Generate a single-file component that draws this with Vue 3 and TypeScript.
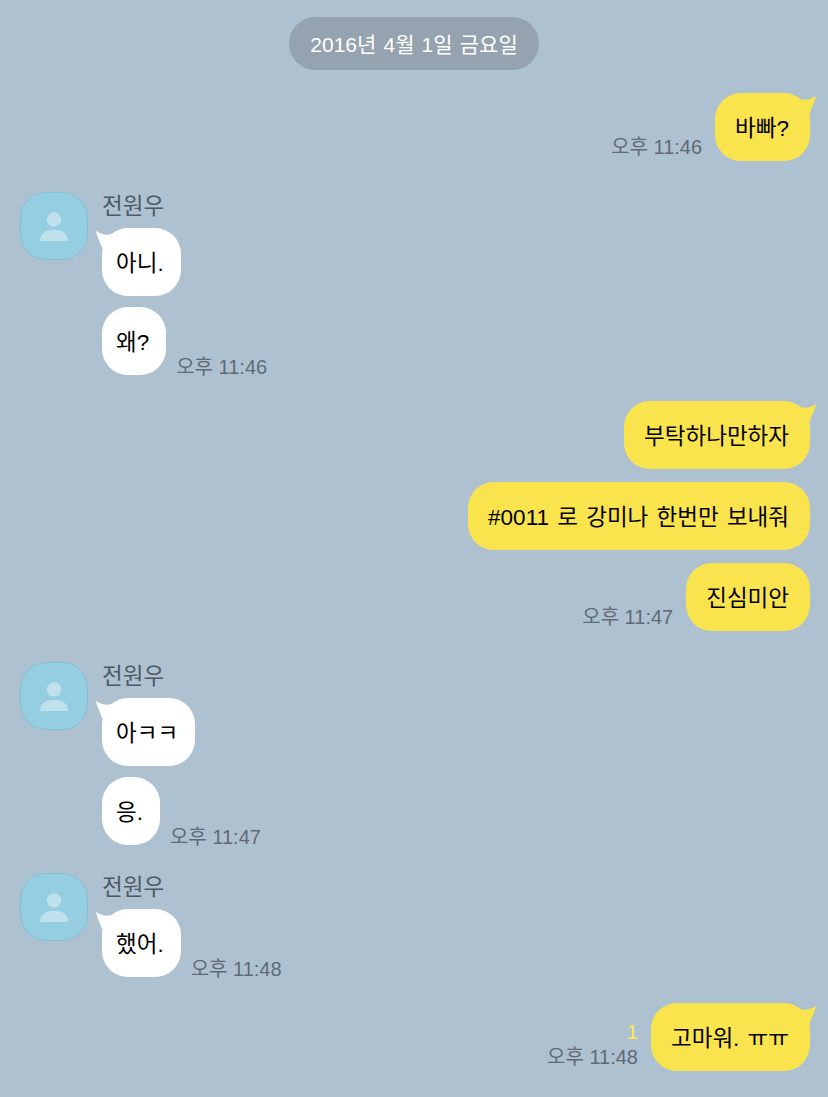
<script setup lang="ts">
type Bubble = { text: string; time?: string; unread?: string };
type Group = {
  mine: boolean;
  gap: "first" | "wide" | "mid" | "tight";
  bubbles: Bubble[];
};

const groups: Group[] = [
  { mine: true, gap: "first", bubbles: [{ text: "바빠?", time: "오후 11:46" }] },
  {
    mine: false,
    gap: "wide",
    bubbles: [{ text: "아니." }, { text: "왜?", time: "오후 11:46" }],
  },
  {
    mine: true,
    gap: "tight",
    bubbles: [
      { text: "부탁하나만하자" },
      { text: "#0011 로 강미나 한번만 보내줘" },
      { text: "진심미안", time: "오후 11:47" },
    ],
  },
  {
    mine: false,
    gap: "wide",
    bubbles: [{ text: "아ㅋㅋ" }, { text: "응.", time: "오후 11:47" }],
  },
  { mine: false, gap: "mid", bubbles: [{ text: "했어.", time: "오후 11:48" }] },
  {
    mine: true,
    gap: "tight",
    bubbles: [{ text: "고마워. ㅠㅠ", time: "오후 11:48", unread: "1" }],
  },
];
</script>

<template>
  <div class="chat">
    <div class="date-row"><span class="date">2016년 4월 1일 금요일</span></div>
    <div v-for="(group, g) in groups" :key="g" class="group" :class="[group.mine ? 'mine' : 'theirs', `gap-${group.gap}`]">
      <div v-if="!group.mine" class="avatar">
        <svg width="30" height="30" viewBox="0 0 30 30">
          <circle cx="15" cy="8.500" r="7.200" fill="#bfe1ec" />
          <path d="M1 30 C1 23 6 19 12 19 L18 19 C24 19 29 23 29 30 Z" fill="#bfe1ec" />
        </svg>
      </div>
      <div class="content">
        <div v-if="!group.mine" class="name">전원우</div>
        <div class="stack">
          <div v-for="(b, i) in group.bubbles" :key="i" class="row">
            <div v-if="b.time" class="meta">
              <span v-if="b.unread" class="unread">{{ b.unread }}</span>
              <span class="time">{{ b.time }}</span>
            </div>
            <div class="bubble">
              <svg v-if="i === 0" class="tail" width="16" height="20" viewBox="0 0 16 20">
                <path v-if="group.mine" d="M0 6 C5 8 10 6 15 3 C14 9 11 13 9 20 L0 20 Z" fill="#fae44e" />
                <path v-else d="M16 6 C11 8 6 6 1 3 C2 9 5 13 7 20 L16 20 Z" fill="#ffffff" />
              </svg>
              <span>{{ b.text }}</span>
            </div>
          </div>
        </div>
      </div>
    </div>
  </div>
</template>

<style scoped>
.chat {
  width: 828px;
  height: 1097px;
  box-sizing: border-box;
  overflow: hidden;
  padding: 17px 18px 0 20px;
  background: #aec1d0;
  font-family: "Liberation Sans", "Noto Sans CJK KR", sans-serif;
}
.date-row {
  display: flex;
  justify-content: center;
  padding-right: 2px;
}
.date {
  height: 53px;
  box-sizing: border-box;
  padding: 0 21px 2px;
  display: flex;
  align-items: center;
  border-radius: 27px;
  background: #95a3b0;
  color: #fff;
  font-size: 21px;
  word-spacing: 1.3px;
}
.group {
  display: flex;
}
.group.mine {
  justify-content: flex-end;
}
.gap-first {
  margin-top: 23px;
}
.gap-wide {
  margin-top: 31px;
}
.gap-mid {
  margin-top: 28px;
}
.gap-tight {
  margin-top: 26px;
}
.avatar {
  width: 68px;
  height: 68px;
  box-sizing: border-box;
  flex: none;
  margin-right: 14px;
  display: flex;
  align-items: center;
  justify-content: center;
  border: 1px solid #86c0d4;
  border-radius: 26px;
  background: #95cee0;
}
.name {
  height: 36px;
  line-height: 30px;
  color: #4d5964;
  font-size: 22.5px;
}
.stack {
  display: flex;
  flex-direction: column;
}
.theirs .stack {
  gap: 11px;
}
.mine .stack {
  gap: 13px;
}
.row {
  display: flex;
  align-items: flex-end;
}
.mine .row {
  justify-content: flex-end;
}
.theirs .row {
  flex-direction: row-reverse;
  justify-content: flex-end;
}
.bubble {
  position: relative;
  height: 68px;
  box-sizing: border-box;
  padding: 0 21px 3px 20px;
  display: flex;
  align-items: center;
  border-radius: 26px;
  color: #000;
  font-size: 22.5px;
  word-spacing: 2px;
  white-space: nowrap;
}
.theirs .bubble {
  padding: 0 17px 3px 14px;
  background: #fff;
}
.mine .bubble {
  background: #fae44e;
}
.tail {
  position: absolute;
  top: 0;
}
.mine .tail {
  right: -7px;
}
.theirs .tail {
  left: -7px;
}
.meta {
  display: flex;
  flex-direction: column;
}
.mine .meta {
  align-items: flex-end;
  margin-right: 13px;
  margin-bottom: 2px;
}
.theirs .meta {
  margin-left: 10px;
}
.time {
  line-height: 24px;
  color: #5f6a75;
  font-size: 20px;
}
.theirs .time {
  line-height: 16px;
}
.unread {
  line-height: 26px;
  color: #fdec50;
  font-size: 20px;
}
</style>
